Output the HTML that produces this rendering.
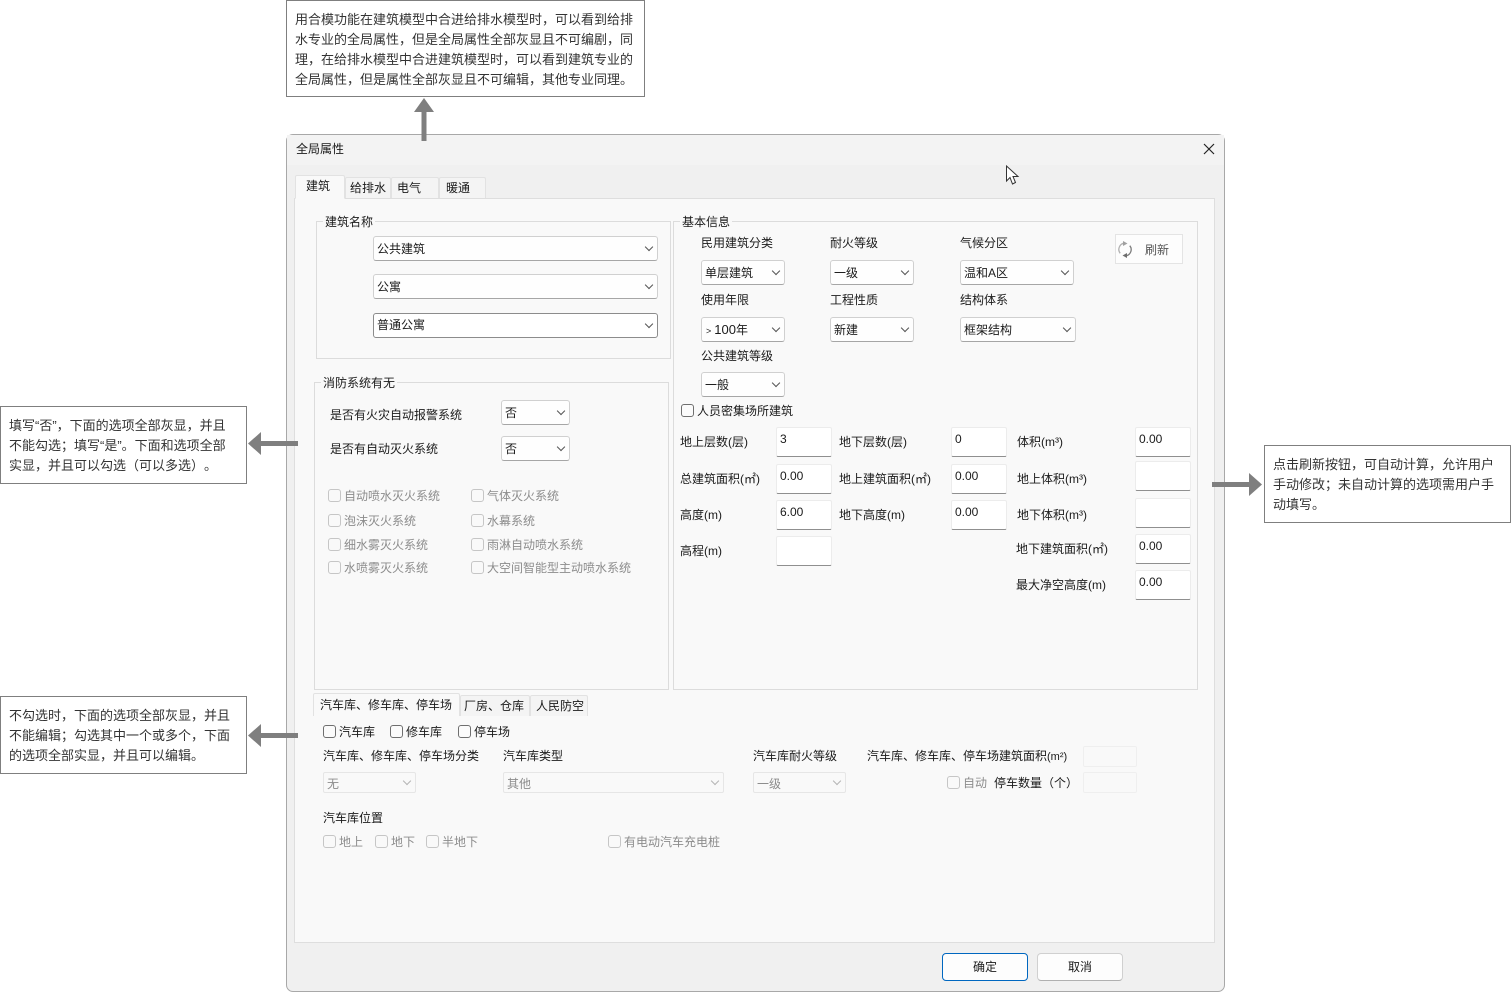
<!DOCTYPE html>
<html lang="zh">
<head>
<meta charset="utf-8">
<title>全局属性</title>
<style>
html,body{margin:0;padding:0;background:#fff}
body{width:1511px;height:992px;position:relative;overflow:hidden;font:12px/16px "Liberation Sans","Noto Sans CJK SC",sans-serif;color:#1a1a1a;text-spacing-trim:space-all}
div,span{box-sizing:border-box}
.a{position:absolute}
.t{position:absolute;white-space:nowrap;line-height:16px;margin-top:1px}
.t.n{margin-top:0}
.g{color:#8c8c8c}
.note{position:absolute;background:#fff;border:1px solid #7f7f7f;font-size:13px;line-height:20px;color:#333;padding:9px 8px 0;white-space:nowrap}
.dlg{position:absolute;left:286px;top:134px;width:939px;height:858px;background:#f0f0f0;border:1px solid #a8a8a8;border-radius:7px;overflow:hidden}
.tb{position:absolute;left:287px;top:135px;width:937px;height:30px;background:#f3f3f3}
.panel{position:absolute;left:294px;top:198px;width:921px;height:745px;background:#f9f9f9;border:1px solid #dedede}
.tab{position:absolute;background:#f4f4f4;border:1px solid #e2e2e2;border-bottom:0;border-radius:2px 2px 0 0}
.tab.on{background:#f9f9f9}
.grp{position:absolute;border:1px solid #dcdcdc}
.lg{position:absolute;background:#f9f9f9;padding:0 2px;white-space:nowrap;line-height:16px}
.c{position:absolute;background:#fefefe;border:1px solid #d0d0d0;border-bottom-color:#a6a6a6;border-radius:3px;padding-left:3px;line-height:24px;white-space:nowrap}
.c:after{content:"";position:absolute;right:5px;top:7px;width:5px;height:5px;border-right:1px solid #555;border-bottom:1px solid #555;transform:rotate(45deg)}
.c.d{background:#f9f9f9;border-color:#e6e6e6;color:#8c8c8c;line-height:22px;border-radius:2px}
.c.d:after{border-color:#b5b5b5;top:5px}
.i{position:absolute;background:#fff;border:1px solid #ececec;border-bottom:1px solid #8f8f8f;border-radius:2px;width:56px;height:29px;padding:3px 3px 0;line-height:16px}
.cb{position:absolute;width:13px;height:13px;background:#fbfbfb;border:1px solid #6f6f6f;border-radius:3px}
.cb.d{border-color:#c6c6c6;background:#f9f9f9}
.x{position:absolute;background:#f9f9f9;border:1px solid #efefef;border-radius:2px}
.btn{position:absolute;top:953px;height:28px;width:86px;background:#fdfdfd;border:1px solid #d0d0d0;border-bottom-color:#b0b0b0;border-radius:4px;text-align:center;line-height:26px}
svg{position:absolute;overflow:visible}
</style>
</head>
<body>

<div class="note" style="left:286px;top:0;width:359px;height:97px">用合模功能在建筑模型中合进给排水模型时，可以看到给排<br>水专业的全局属性，但是全局属性全部灰显且不可编剧，同<br>理，在给排水模型中合进建筑模型时，可以看到建筑专业的<br>全局属性，但是属性全部灰显且不可编辑，其他专业同理。</div>
<div class="note" style="left:0;top:406px;width:247px;height:78px">填写“否”，下面的选项全部灰显，并且<br>不能勾选；填写“是”。下面和选项全部<br>实显，并且可以勾选（可以多选）。</div>
<div class="note" style="left:0;top:696px;width:247px;height:78px">不勾选时，下面的选项全部灰显，并且<br>不能编辑；勾选其中一个或多个，下面<br>的选项全部实显，并且可以编辑。</div>
<div class="note" style="left:1264px;top:445px;width:247px;height:78px">点击刷新按钮，可自动计算，允许用户<br>手动修改；未自动计算的选项需用户手<br>动填写。</div>

<div class="dlg"></div>
<div class="tb"></div>

<div class="t n" style="left:296px;top:141px">全局属性</div>

<div class="panel"></div>
<div class="tab on" style="left:295px;top:175px;width:50px;height:24px;border-bottom:1px solid #f9f9f9"></div>
<div class="tab" style="left:345px;top:177px;width:46px;height:21px"></div>
<div class="tab" style="left:391px;top:177px;width:48px;height:21px"></div>
<div class="tab" style="left:439px;top:177px;width:47px;height:21px"></div>
<div class="t n" style="left:306px;top:178px">建筑</div>
<div class="t n" style="left:350px;top:180px">给排水</div>
<div class="t n" style="left:397px;top:180px">电气</div>
<div class="t n" style="left:446px;top:180px">暖通</div>

<div class="grp" style="left:316px;top:221px;width:355px;height:138px"></div>
<div class="lg" style="left:323px;top:214px">建筑名称</div>
<div class="c" style="left:373px;top:236px;width:285px;height:25px">公共建筑</div>
<div class="c" style="left:373px;top:274px;width:285px;height:25px">公寓</div>
<div class="c" style="left:373px;top:313px;width:285px;height:25px;border-color:#8c8c8c;background:#fff;line-height:23px">普通公寓</div>

<div class="grp" style="left:314px;top:382px;width:355px;height:308px"></div>
<div class="lg" style="left:321px;top:375px">消防系统有无</div>
<div class="t" style="left:330px;top:406px">是否有火灾自动报警系统</div>
<div class="t n" style="left:330px;top:441px">是否有自动灭火系统</div>
<div class="c" style="left:501px;top:400px;width:69px;height:25px">否</div>
<div class="c" style="left:501px;top:436px;width:69px;height:25px">否</div>

<div class="cb d" style="left:328px;top:489px"></div><div class="t g" style="left:344px;top:487px">自动喷水灭火系统</div>
<div class="cb d" style="left:471px;top:489px"></div><div class="t g" style="left:487px;top:487px">气体灭火系统</div>
<div class="cb d" style="left:328px;top:514px"></div><div class="t g" style="left:344px;top:512px">泡沫灭火系统</div>
<div class="cb d" style="left:471px;top:514px"></div><div class="t g" style="left:487px;top:512px">水幕系统</div>
<div class="cb d" style="left:328px;top:538px"></div><div class="t g" style="left:344px;top:536px">细水雾灭火系统</div>
<div class="cb d" style="left:471px;top:538px"></div><div class="t g" style="left:487px;top:536px">雨淋自动喷水系统</div>
<div class="cb d" style="left:328px;top:561px"></div><div class="t g" style="left:344px;top:559px">水喷雾灭火系统</div>
<div class="cb d" style="left:471px;top:561px"></div><div class="t g" style="left:487px;top:559px">大空间智能型主动喷水系统</div>

<div class="grp" style="left:673px;top:221px;width:525px;height:469px"></div>
<div class="lg" style="left:680px;top:214px">基本信息</div>
<div class="t" style="left:701px;top:234px">民用建筑分类</div>
<div class="t" style="left:830px;top:234px">耐火等级</div>
<div class="t" style="left:960px;top:234px">气候分区</div>
<div class="c" style="left:701px;top:260px;width:84px;height:25px">单层建筑</div>
<div class="c" style="left:830px;top:260px;width:84px;height:25px">一级</div>
<div class="c" style="left:960px;top:260px;width:114px;height:25px">温和A区</div>
<div class="t" style="left:701px;top:291px">使用年限</div>
<div class="t" style="left:830px;top:291px">工程性质</div>
<div class="t" style="left:960px;top:291px">结构体系</div>
<div class="c" style="left:701px;top:317px;width:84px;height:25px"><span style="font-size:9px;margin:0 3px 0 1px">&gt;</span><span style="font-size:13px">100</span>年</div>
<div class="c" style="left:830px;top:317px;width:84px;height:25px">新建</div>
<div class="c" style="left:960px;top:317px;width:116px;height:25px">框架结构</div>
<div class="t" style="left:701px;top:347px">公共建筑等级</div>
<div class="c" style="left:701px;top:372px;width:84px;height:25px">一般</div>

<div class="a" style="left:1115px;top:234px;width:68px;height:30px;background:#fdfdfd;border:1px solid #e4e4e4"></div>
<div class="t" style="left:1145px;top:241px;color:#555">刷新</div>

<div class="cb" style="left:681px;top:404px"></div>
<div class="t" style="left:697px;top:402px">人员密集场所建筑</div>

<div class="t" style="left:680px;top:433px">地上层数(层)</div>
<div class="t" style="left:680px;top:470px">总建筑面积(㎡)</div>
<div class="t" style="left:680px;top:506px">高度(m)</div>
<div class="t" style="left:680px;top:542px">高程(m)</div>
<div class="t" style="left:839px;top:433px">地下层数(层)</div>
<div class="t" style="left:839px;top:470px">地上建筑面积(㎡)</div>
<div class="t" style="left:839px;top:506px">地下高度(m)</div>
<div class="t" style="left:1017px;top:433px">体积(m³)</div>
<div class="t" style="left:1017px;top:470px">地上体积(m³)</div>
<div class="t" style="left:1017px;top:506px">地下体积(m³)</div>
<div class="t" style="left:1016px;top:540px">地下建筑面积(㎡)</div>
<div class="t" style="left:1016px;top:576px">最大净空高度(m)</div>

<div class="i" style="left:776px;top:427px;height:30px">3</div>
<div class="i" style="left:776px;top:464px;height:30px">0.00</div>
<div class="i" style="left:776px;top:500px;height:30px">6.00</div>
<div class="i" style="left:776px;top:536px;height:30px"></div>
<div class="i" style="left:951px;top:427px;height:30px">0</div>
<div class="i" style="left:951px;top:464px;height:30px">0.00</div>
<div class="i" style="left:951px;top:500px;height:30px">0.00</div>
<div class="i" style="left:1135px;top:427px;height:30px">0.00</div>
<div class="i" style="left:1135px;top:461px;height:30px"></div>
<div class="i" style="left:1135px;top:498px;height:30px"></div>
<div class="i" style="left:1135px;top:534px;height:30px">0.00</div>
<div class="i" style="left:1135px;top:570px;height:30px">0.00</div>

<div class="tab on" style="left:313px;top:693px;width:147px;height:23px;border-bottom:0"></div>
<div class="tab" style="left:460px;top:695px;width:70px;height:21px"></div>
<div class="tab" style="left:530px;top:695px;width:58px;height:21px"></div>
<div class="t" style="left:320px;top:696px">汽车库、修车库、停车场</div>
<div class="t n" style="left:464px;top:698px">厂房、仓库</div>
<div class="t n" style="left:536px;top:698px">人民防空</div>

<div class="cb" style="left:323px;top:725px"></div><div class="t n" style="left:339px;top:724px">汽车库</div>
<div class="cb" style="left:390px;top:725px"></div><div class="t n" style="left:406px;top:724px">修车库</div>
<div class="cb" style="left:458px;top:725px"></div><div class="t n" style="left:474px;top:724px">停车场</div>

<div class="t n" style="left:323px;top:748px">汽车库、修车库、停车场分类</div>
<div class="t n" style="left:503px;top:748px">汽车库类型</div>
<div class="t n" style="left:753px;top:748px">汽车库耐火等级</div>
<div class="t n" style="left:867px;top:748px">汽车库、修车库、停车场建筑面积<span style="font-size:11px">(m²)</span></div>
<div class="c d" style="left:323px;top:772px;width:93px;height:21px">无</div>
<div class="c d" style="left:503px;top:772px;width:221px;height:21px">其他</div>
<div class="c d" style="left:753px;top:772px;width:93px;height:21px">一级</div>
<div class="x" style="left:1083px;top:746px;width:54px;height:21px"></div>
<div class="x" style="left:1083px;top:772px;width:54px;height:21px"></div>
<div class="cb d" style="left:947px;top:776px"></div><div class="t n g" style="left:963px;top:775px">自动</div>
<div class="t n" style="left:994px;top:775px">停车数量（个）</div>

<div class="t n" style="left:323px;top:810px">汽车库位置</div>
<div class="cb d" style="left:323px;top:835px"></div><div class="t n g" style="left:339px;top:834px">地上</div>
<div class="cb d" style="left:375px;top:835px"></div><div class="t n g" style="left:391px;top:834px">地下</div>
<div class="cb d" style="left:426px;top:835px"></div><div class="t n g" style="left:442px;top:834px">半地下</div>
<div class="cb d" style="left:608px;top:835px"></div><div class="t n g" style="left:624px;top:834px">有电动汽车充电桩</div>

<div class="btn" style="left:942px;border-color:#0067c0">确定</div>
<div class="btn" style="left:1037px">取消</div>

<svg style="left:0;top:0" width="1511" height="992">
<path d="M421.500 141V112H414L424 98L434 112H426.500V141Z" fill="#7f7f7f"/>
<path d="M298 441V446H261V455L248 443.500L261 432V441Z" fill="#7f7f7f"/>
<path d="M298 733V738H261V747L248 735.500L261 724V733Z" fill="#7f7f7f"/>
<path d="M1212 482V487H1249V496L1262 484.500L1249 473V482Z" fill="#7f7f7f"/>
<path d="M1204 144L1214 154M1214 144L1204 154" stroke="#222" stroke-width="1.200" fill="none"/>
<path d="M1006.500 166V181L1010 177.500L1012.500 184L1015.500 182.500L1013 176.500H1018Z" fill="#fff" stroke="#333" stroke-width="1"/>
<path d="M1124 243.200A6.300 6.300 0 0 0 1120.200 253.300" fill="none" stroke="#b0b0b0" stroke-width="1.300"/>
<path d="M1126 255.800A6.300 6.300 0 0 0 1129.800 245.700" fill="none" stroke="#7c7c7c" stroke-width="1.300"/>
<path d="M1123 241L1127.500 243.500L1123 246Z" fill="#a0a0a0"/>
<path d="M1127 253L1122.500 255.500L1127 258Z" fill="#6e6e6e"/>
</svg>

</body>
</html>
